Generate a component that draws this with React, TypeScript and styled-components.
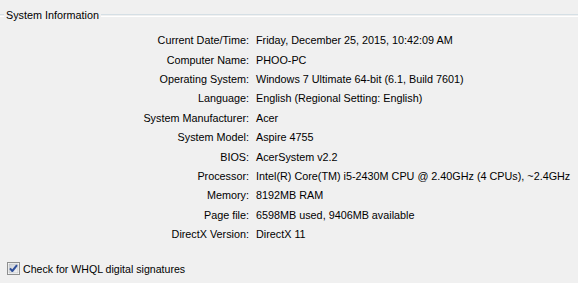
import React from "react";
import styled, { createGlobalStyle } from "styled-components";

const Global = createGlobalStyle`
  html, body { margin: 0; padding: 0; background: #f0f0f0; }
  body { font-family: "Liberation Sans", Arial, sans-serif; font-size: 10.8px; color: #000; }
`;

const Page = styled.div`
  width: 578px;
  height: 283px;
  overflow: hidden;
  display: flex;
  flex-direction: column;
`;

const GroupHeader = styled.div`
  display: flex;
  align-items: center;
  height: 14px;
  margin-top: 8px;
`;

const Rule = styled.div<{ $grow?: boolean }>`
  height: 1px;
  border-top: 1px solid #d5dfe5;
  border-bottom: 1px solid #ffffff;
  margin-top: 1px;
  ${(p) => (p.$grow ? "flex: 1;" : "width: 4px;")}
`;

const Title = styled.span`
  padding: 0 2px 0 2px;
  line-height: 14px;
`;

const InfoGrid = styled.div`
  display: grid;
  grid-template-columns: 249px 1fr;
  column-gap: 7px;
  grid-auto-rows: 19.4px;
  align-items: center;
  margin-top: 8.5px;
`;

const Label = styled.div`
  text-align: right;
  white-space: nowrap;
`;

const Value = styled.div`
  white-space: nowrap;
`;

const CheckRow = styled.label`
  display: flex;
  align-items: center;
  gap: 3px;
  margin-top: auto;
  margin-bottom: 8px;
  padding-left: 7px;
  font-size: 10.6px;
`;

const Box = styled.span`
  width: 13px;
  height: 13px;
  display: inline-flex;
`;

const rows: [string, string][] = [
  ["Current Date/Time:", "Friday, December 25, 2015, 10:42:09 AM"],
  ["Computer Name:", "PHOO-PC"],
  ["Operating System:", "Windows 7 Ultimate 64-bit (6.1, Build 7601)"],
  ["Language:", "English (Regional Setting: English)"],
  ["System Manufacturer:", "Acer"],
  ["System Model:", "Aspire 4755"],
  ["BIOS:", "AcerSystem v2.2"],
  ["Processor:", "Intel(R) Core(TM) i5-2430M CPU @ 2.40GHz (4 CPUs), ~2.4GHz"],
  ["Memory:", "8192MB RAM"],
  ["Page file:", "6598MB used, 9406MB available"],
  ["DirectX Version:", "DirectX 11"],
];

function CheckIcon() {
  return (
    <svg width="13" height="13" viewBox="0 0 13 13">
      <defs>
        <linearGradient id="cbg" x1="0" y1="0" x2="1" y2="1">
          <stop offset="0" stopColor="#cbcfd5" />
          <stop offset="1" stopColor="#f6f6f6" />
        </linearGradient>
      </defs>
      <rect x="0.5" y="0.5" width="12" height="12" fill="#fff" stroke="#8e8f8f" />
      <rect x="2" y="2" width="9" height="9" fill="url(#cbg)" stroke="#b4b7bb" strokeWidth="0.6" />
      <path d="M3 6.3 L5.3 9 L10 3.2" fill="none" stroke="#2f4f9a" strokeWidth="2" strokeLinejoin="round" />
    </svg>
  );
}

export default function App() {
  return (
    <Page>
      <Global />
      <GroupHeader>
        <Rule />
        <Title>System Information</Title>
        <Rule $grow />
      </GroupHeader>
      <InfoGrid>
        {rows.map(([l, v]) => (
          <React.Fragment key={l}>
            <Label>{l}</Label>
            <Value>{v}</Value>
          </React.Fragment>
        ))}
      </InfoGrid>
      <CheckRow>
        <Box>
          <CheckIcon />
        </Box>
        Check for WHQL digital signatures
      </CheckRow>
    </Page>
  );
}
